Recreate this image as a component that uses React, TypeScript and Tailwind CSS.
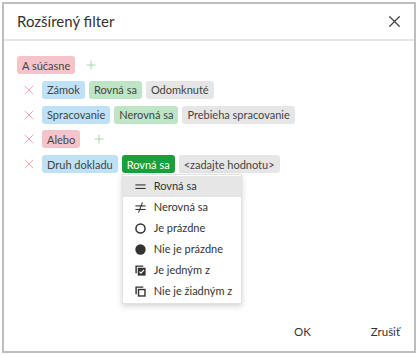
import React from 'react';
import { X, Plus } from 'lucide-react';

type Tone = 'pink' | 'blue' | 'green' | 'gray' | 'active';

const toneClass: Record<Tone, string> = {
  pink: 'bg-[#f5c4cb] text-[#444]',
  blue: 'bg-[#bfe1f6] text-[#444]',
  green: 'bg-[#bde5c6] text-[#444]',
  gray: 'bg-[#e6e6e6] text-[#444]',
  active: 'bg-[#1aa03a] text-white',
};

const Chip: React.FC<{ tone: Tone; children: React.ReactNode }> = ({ tone, children }) => (
  <span
    className={`inline-flex h-[18px] items-center whitespace-nowrap rounded-[3px] px-[5px] text-[11px] leading-none ${toneClass[tone]}`}
  >
    {children}
  </span>
);

const Remove = () => <X className="h-[16px] w-[16px] shrink-0 text-[#f2a0aa]" strokeWidth={1.4} />;
const Add = () => <Plus className="h-[14px] w-[14px] shrink-0 text-[#9fd7aa]" strokeWidth={1.6} />;

const ops = [
  { label: 'Rovná sa', icon: 'eq' },
  { label: 'Nerovná sa', icon: 'neq' },
  { label: 'Je prázdne', icon: 'empty' },
  { label: 'Nie je prázdne', icon: 'filled' },
  { label: 'Je jedným z', icon: 'in' },
  { label: 'Nie je žiadným z', icon: 'notin' },
];

const OpIcon: React.FC<{ kind: string }> = ({ kind }) => (
  <svg width="11" height="11" viewBox="0 0 14 14" className="shrink-0 text-[#333]">
    {kind === 'eq' && (
      <g stroke="currentColor" strokeWidth="1.4">
        <line x1="0.5" y1="5" x2="13.5" y2="5" />
        <line x1="0.5" y1="9.5" x2="13.5" y2="9.5" />
      </g>
    )}
    {kind === 'neq' && (
      <g stroke="currentColor" strokeWidth="1.4">
        <line x1="0.5" y1="5" x2="13.5" y2="5" />
        <line x1="0.5" y1="9.5" x2="13.5" y2="9.5" />
        <line x1="9.5" y1="0.5" x2="4.5" y2="13.5" />
      </g>
    )}
    {kind === 'empty' && <circle cx="7" cy="7" r="5.8" fill="none" stroke="currentColor" strokeWidth="1.9" />}
    {kind === 'filled' && <circle cx="7" cy="7" r="6.6" fill="currentColor" />}
    {kind === 'in' && (
      <g>
        <path d="M0.5 0.5h10v1.8H2.3V10.5H0.5z" fill="currentColor" />
        <rect x="3.5" y="3.5" width="10" height="10" fill="currentColor" />
        <path d="M5.6 8.4l2 2 3.8-4.2" fill="none" stroke="#fff" strokeWidth="1.5" />
      </g>
    )}
    {kind === 'notin' && (
      <g>
        <path d="M0.5 0.5h10v1.8H2.3V10.5H0.5z" fill="currentColor" />
        <rect x="4.5" y="4.5" width="8.2" height="8.2" fill="none" stroke="currentColor" strokeWidth="1.8" />
      </g>
    )}
  </svg>
);

const Line: React.FC<{ children: React.ReactNode }> = ({ children }) => (
  <div className="flex h-[18px] items-center pl-[4px]">
    <Remove />
    <div className="ml-[5px] flex items-center gap-[4px]">{children}</div>
  </div>
);

export default function App() {
  return (
    <div className="h-[355px] w-[418px] bg-white p-[2px]" style={{ fontFamily: 'Lato, "Noto Sans", sans-serif' }}>
      <div className="flex h-[351px] flex-col border-2 border-[#bdbdbd] bg-white">
        <div className="flex h-[37px] shrink-0 items-center justify-between border-b-2 border-[#e6e6e6] pl-[13px] pr-[10px]">
          <span className="text-[15px] text-[#333]">Rozšírený filter</span>
          <X className="h-[19px] w-[19px] text-[#444]" strokeWidth={1.6} />
        </div>
        <div className="flex flex-1 flex-col gap-[6.8px] pl-[13px] pt-[15px]">
          <div className="flex h-[18px] items-center gap-[9px]">
            <Chip tone="pink">A súčasne</Chip>
            <Add />
          </div>
          <Line>
            <Chip tone="blue">Zámok</Chip>
            <Chip tone="green">Rovná sa</Chip>
            <Chip tone="gray">Odomknuté</Chip>
          </Line>
          <Line>
            <Chip tone="blue">Spracovanie</Chip>
            <Chip tone="green">Nerovná sa</Chip>
            <Chip tone="gray">Prebieha spracovanie</Chip>
          </Line>
          <Line>
            <Chip tone="pink">Alebo</Chip>
            <span className="ml-[8px] flex">
              <Add />
            </span>
          </Line>
          <Line>
            <Chip tone="blue">Druh dokladu</Chip>
            <div className="relative flex">
              <Chip tone="active">Rovná sa</Chip>
              <div className="absolute left-0 top-[19px] z-10 w-[120px] border border-[#e2e2e2] bg-white py-[1px] shadow-[0_2px_6px_rgba(0,0,0,0.18)]">
                {ops.map((o, i) => (
                  <div
                    key={o.label}
                    className={`flex h-[21px] items-center gap-[8px] whitespace-nowrap pl-[12px] text-[11px] text-[#333] ${
                      i === 0 ? 'bg-[#e6e6e6]' : ''
                    }`}
                  >
                    <OpIcon kind={o.icon} />
                    <span>{o.label}</span>
                  </div>
                ))}
              </div>
            </div>
            <Chip tone="gray">&lt;zadajte hodnotu&gt;</Chip>
          </Line>
        </div>
        <div className="flex h-[36px] shrink-0 items-start justify-end gap-[60px] pr-[14px] pt-[8px] text-[11.5px] text-[#333]">
          <span>OK</span>
          <span>Zrušiť</span>
        </div>
      </div>
    </div>
  );
}
